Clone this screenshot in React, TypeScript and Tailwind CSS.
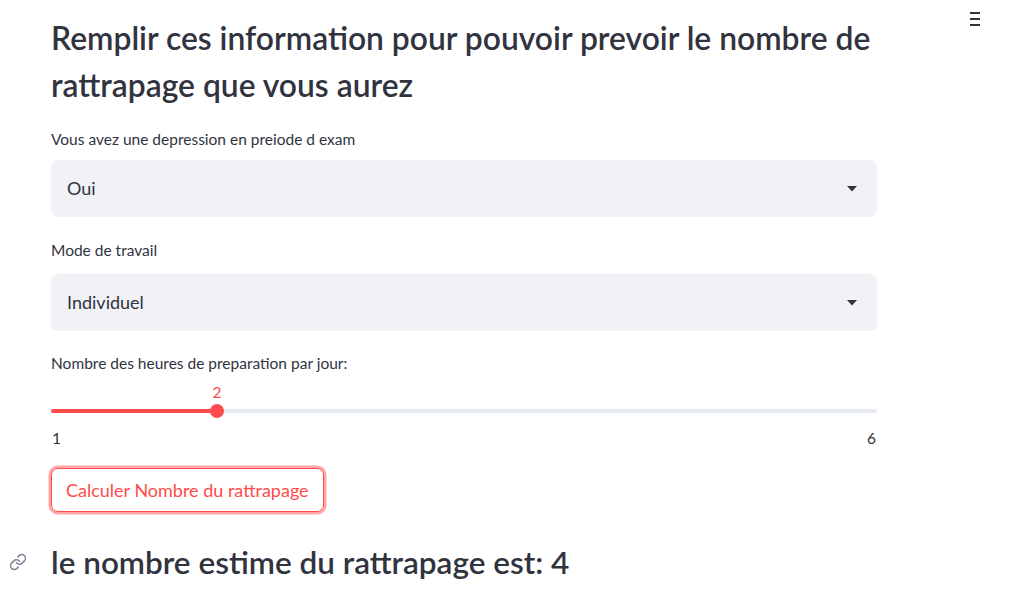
import { Link } from "lucide-react";

function Select({ value }: { value: string }) {
  return (
    <div className="flex h-[57px] items-center justify-between rounded-[7px] bg-[#f0f2f6] pl-[16px] pr-[20px] text-[18px] text-[#31333f]">
      <span>{value}</span>
      <svg width="10" height="6" viewBox="0 0 10 6">
        <path d="M0 0 L10 0 L5 5.5 Z" fill="#31333f" />
      </svg>
    </div>
  );
}

export default function App() {
  return (
    <div
      className="relative h-[605px] w-[1016px] overflow-hidden bg-white text-[#31333f]"
      style={{ fontFamily: "Lato, 'Noto Sans', sans-serif" }}
    >
      <div className="absolute left-[970px] top-[12px] flex flex-col gap-[4px]">
        <span className="h-[2px] w-[10px] bg-[#31333f]" />
        <span className="h-[2px] w-[10px] bg-[#31333f]" />
        <span className="h-[2px] w-[10px] bg-[#31333f]" />
      </div>

      <div className="ml-[51px] flex w-[826px] flex-col pt-[15px]">
        <h2 className="text-[31.8px] font-semibold leading-[47px]">
          Remplir ces information pour pouvoir prevoir le nombre de rattrapage que vous aurez
        </h2>

        <label className="mt-[20px] text-[15.5px] leading-[20px]">Vous avez une depression en preiode d exam</label>
        <div className="mt-[11px]">
          <Select value="Oui" />
        </div>

        <label className="mt-[23px] text-[15.5px] leading-[20px]">Mode de travail</label>
        <div className="mt-[14px]">
          <Select value="Individuel" />
        </div>

        <label className="mt-[22px] text-[15.5px] leading-[20px]">Nombre des heures de preparation par jour:</label>

        <div className="relative mt-[17px] h-[60px]">
          <div className="absolute left-0 top-[19px] h-[4px] w-full rounded-full bg-[#e6eaf1]" />
          <div className="absolute left-0 top-[19px] h-[4px] w-[166px] rounded-full bg-[#ff4b4b]" />
          <div className="absolute left-[159px] top-[14px] h-[14px] w-[14px] rounded-full bg-[#ff4b4b]" />
          <span className="absolute left-[166px] top-[-9px] -translate-x-1/2 text-[15.5px] text-[#ff4b4b]">2</span>
          <span className="absolute left-[1px] top-[37px] text-[15.5px]">1</span>
          <span className="absolute right-[1px] top-[37px] text-[15.5px]">6</span>
        </div>

        <div className="mt-[18px]">
          <button className="h-[44px] rounded-[7px] border border-[#ff4b4b] px-[14px] text-[18px] text-[#ff4b4b] shadow-[0_0_0_2.5px_rgba(255,75,75,0.5)]">
            Calculer Nombre du rattrapage
          </button>
        </div>

        <div className="relative mt-[28px]">
          <Link className="absolute left-[-42px] top-[13px] text-[#808495]" size={18} strokeWidth={2} />
          <h3 className="text-[31.5px] font-semibold leading-[44px]">le nombre estime du rattrapage est: 4</h3>
        </div>
      </div>
    </div>
  );
}
